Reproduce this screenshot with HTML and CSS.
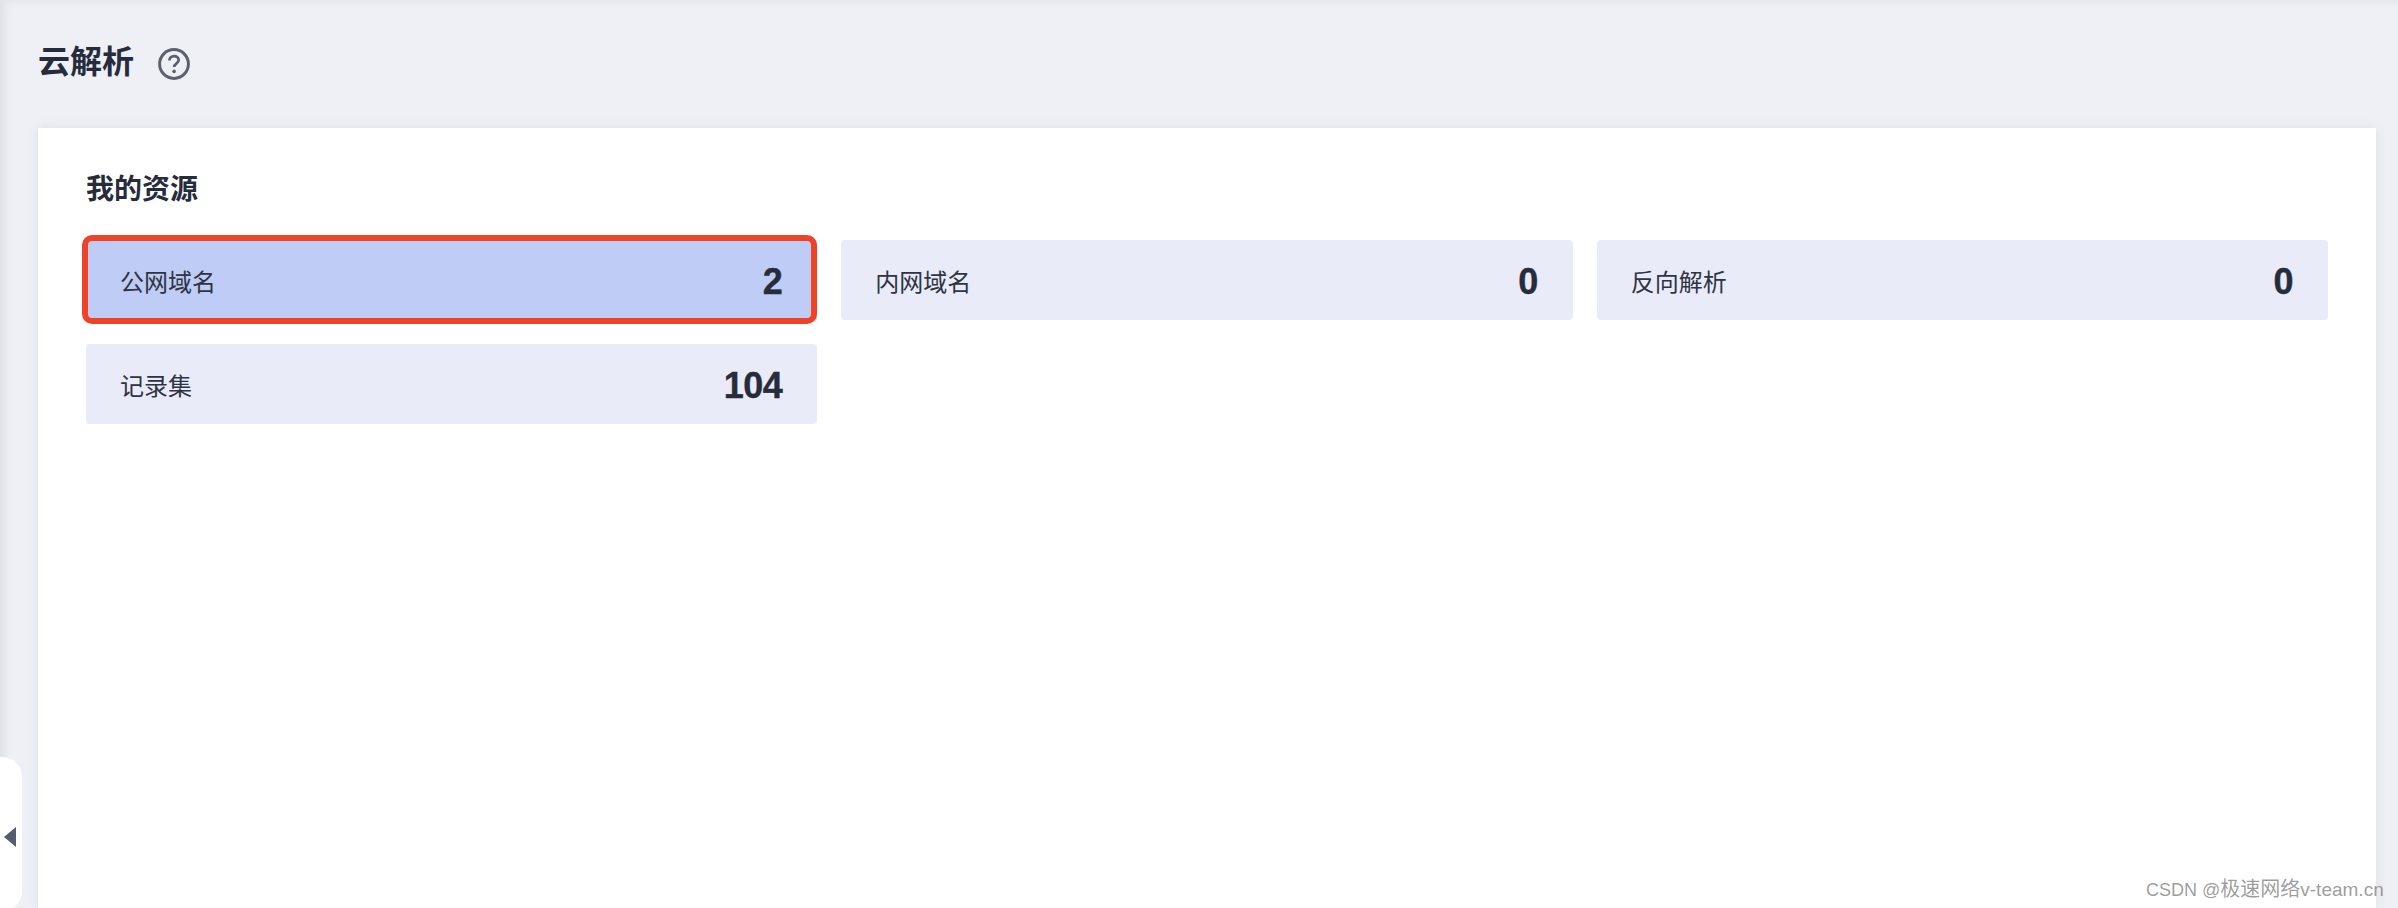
FILE: index.html
```html
<!DOCTYPE html>
<html lang="zh-CN">
<head>
  <meta charset="UTF-8" />
  <meta name="viewport" content="width=device-width, initial-scale=1.0"/>
  <title>云解析</title>
  <link rel="stylesheet" href="styles.css">
</head>
<body>
  <div class="page">
    <div class="page-head">
      <h1>云解析</h1>
      <svg class="help-icon" width="32" height="32" viewBox="0 0 32 32" fill="none">
        <circle cx="16" cy="16" r="14.4" stroke="#5b6170" stroke-width="3"/>
        <path d="M11.4 12.6c0-2.7 2.1-4.5 4.7-4.5s4.6 1.7 4.6 4c0 3.5-4.6 3.4-4.6 6.9" stroke="#5b6170" stroke-width="2.8"/>
        <circle cx="16.1" cy="23.4" r="1.8" fill="#5b6170"/>
      </svg>
    </div>

    <div class="card">
      <h2>我的资源</h2>
      <div class="resource-grid">
        <div class="resource active">
          <span class="resource-name">公网域名</span>
          <span class="resource-count">2</span>
          <div class="highlight"></div>
        </div>
        <div class="resource">
          <span class="resource-name">内网域名</span>
          <span class="resource-count">0</span>
        </div>
        <div class="resource">
          <span class="resource-name">反向解析</span>
          <span class="resource-count">0</span>
        </div>
        <div class="resource">
          <span class="resource-name">记录集</span>
          <span class="resource-count">104</span>
        </div>
      </div>
    </div>
  </div>

  <div class="side-toggle"><span class="side-arrow"></span></div>
  <div class="watermark">CSDN @<span class="watermark-cjk">极速网络</span><span class="watermark-tail">v-team.cn</span></div>
</body>
</html>
```

FILE: styles.css
```css
html, body {
  margin: 0;
  height: 908px;
  overflow: hidden;
}

body {
  font-family: "Liberation Sans", "Noto Sans CJK SC", sans-serif;
  background-color: #eef0f5;
  color: #262c3c;
  position: relative;
  box-shadow: inset 8px 4px 8px -3px #dfe1e8;
}

.page {
  padding: 0 22px 0 38px;
}

.page-head {
  display: flex;
  align-items: center;
  height: 128px;
  gap: 24px;
}

.page-head h1 {
  margin: 0;
  font-size: 32px;
  font-weight: 700;
  line-height: 44px;
  position: relative;
  top: -2px;
}

.help-icon {
  flex-shrink: 0;
}

.card {
  background-color: #fff;
  height: 780px;
  padding: 42px 48px 0;
  box-sizing: border-box;
  box-shadow: 0 0 10px #dcdee6;
}

.card h2 {
  margin: 0 0 30px;
  font-size: 28px;
  font-weight: 700;
  line-height: 40px;
}

.resource-grid {
  display: grid;
  grid-template-columns: repeat(3, 1fr);
  gap: 24px;
}

.resource {
  position: relative;
  display: flex;
  align-items: center;
  justify-content: space-between;
  height: 80px;
  padding: 0 34px;
  background-color: #e9ebf8;
  border-radius: 4px;
}

.resource.active {
  background-color: #bfccf5;
}

.resource-name {
  font-size: 24px;
  color: #2e3443;
}

.resource-count {
  font-size: 36px;
  font-weight: 700;
  letter-spacing: -0.5px;
  line-height: 40px;
  padding-top: 3px;
  margin-right: 1px;
  -webkit-text-stroke: 0.4px #262c3c;
}

/* red frame drawn round the selected tile */
.highlight {
  position: absolute;
  top: -5px;
  left: -4px;
  right: 0;
  bottom: -4px;
  border: 6px solid #ee4327;
  border-radius: 10px;
}

.side-toggle {
  position: absolute;
  left: 0;
  top: 757px;
  width: 22px;
  height: 154px;
  background-color: #fff;
  border-radius: 0 20px 20px 0;
}

.side-arrow {
  position: absolute;
  left: 4px;
  top: 70px;
  border-style: solid;
  border-width: 10px 12px 10px 0;
  border-color: transparent #565c6e transparent transparent;
}

.watermark {
  position: absolute;
  left: 2146px;
  top: 877px;
  font-size: 18px;
  line-height: 24px;
  color: rgba(90, 90, 90, 0.6);
  white-space: nowrap;
}

.watermark-cjk {
  font-size: 20px;
}

.watermark-tail {
  font-size: 19px;
}
```
